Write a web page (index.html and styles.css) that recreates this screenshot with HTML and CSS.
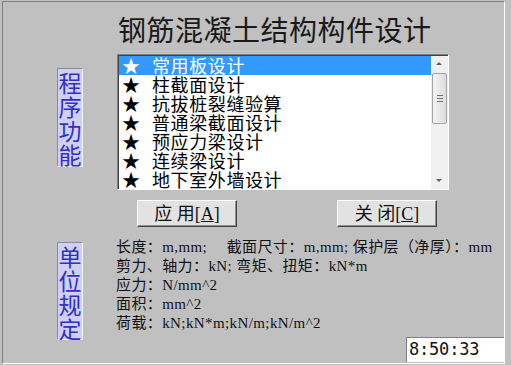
FILE: index.html
```html
<!DOCTYPE html>
<html lang="zh-CN">
<head>
<meta charset="UTF-8" />
<title>钢筋混凝土结构构件设计</title>
<link rel="stylesheet" href="styles.css">
</head>
<body>
  <div class="window">
    <h1 class="title">钢筋混凝土结构构件设计</h1>

    <div class="section">
      <div class="tag tag-func">程序功能</div>
      <div class="listbox">
        <ul class="items">
          <li class="item selected"><span class="star">★</span>常用板设计</li>
          <li class="item"><span class="star">★</span>柱截面设计</li>
          <li class="item"><span class="star">★</span>抗拔桩裂缝验算</li>
          <li class="item"><span class="star">★</span>普通梁截面设计</li>
          <li class="item"><span class="star">★</span>预应力梁设计</li>
          <li class="item"><span class="star">★</span>连续梁设计</li>
          <li class="item"><span class="star">★</span>地下室外墙设计</li>
        </ul>
        <div class="scrollbar">
          <div class="sb-btn sb-up"></div>
          <div class="sb-thumb"><i></i><i></i><i></i></div>
          <div class="sb-track"></div>
          <div class="sb-btn sb-down"></div>
        </div>
      </div>
    </div>

    <div class="buttons">
      <button class="btn">应 用[<u>A</u>]</button>
      <button class="btn">关 闭[<u>C</u>]</button>
    </div>

    <div class="section units-section">
      <div class="tag tag-units">单位规定</div>
      <div class="units">
        <p>长度：m,mm;　 截面尺寸：m,mm; 保护层（净厚）：mm</p>
        <p>剪力、轴力：kN; 弯矩、扭矩：kN*m</p>
        <p>应力：N/mm^2</p>
        <p>面积：mm^2</p>
        <p>荷载：kN;kN*m;kN/m;kN/m^2</p>
        <div class="clock">8:50:33</div>
      </div>
    </div>
  </div>
</body>
</html>
```

FILE: styles.css
```css
body {
  margin: 0;
  background: #c0c0c0;
  font-family: "Noto Sans CJK SC", sans-serif;
  color: #111;
}
.window {
  margin: 1px 6px 0 2px;
  height: 363px;
  box-sizing: border-box;
  border-top: 1px solid #808080;
  border-left: 1px solid #808080;
  border-right: 1px solid #fff;
  border-bottom: 1px solid #fff;
  display: flex;
  flex-direction: column;
}
.title {
  margin: 11px 0 0 115px;
  font-size: 28px;
  font-weight: 400;
  line-height: 32px;
  letter-spacing: 0.5px;
  color: #1a1a1a;
}
.section {
  display: flex;
  align-items: flex-start;
  margin-top: 9px;
}
.tag {
  width: 26px;
  margin-left: 54px;
  box-sizing: border-box;
  background: #d0d0f6;
  color: #3030c8;
  border-top: 1px solid #8a8a9a;
  border-left: 1px solid #8a8a9a;
  border-right: 1px solid #f4f4ff;
  border-bottom: 1px solid #f4f4ff;
  font-size: 23px;
  line-height: 24px;
  text-align: center;
  padding: 1px 0;
}
.tag-func {
  margin-top: 14px;
  height: 99px;
}
.listbox {
  margin-left: 34px;
  width: 332px;
  height: 136px;
  box-sizing: border-box;
  display: flex;
  background: #fff;
  border-top: 1px solid #808080;
  border-left: 1px solid #808080;
  border-right: 1px solid #fff;
  border-bottom: 1px solid #fff;
  box-shadow: inset 1px 1px 0 #404040;
  padding: 1px 0 0 1px;
}
.items {
  list-style: none;
  margin: 0;
  padding: 0;
  flex: 1;
  overflow: hidden;
}
.item {
  height: 19px;
  line-height: 19px;
  font-size: 18px;
  letter-spacing: 0.6px;
  color: #000;
  padding-left: 3px;
  white-space: nowrap;
}
.item.selected {
  background: #3399ff;
  color: #fff;
}
.star {
  display: inline-block;
  width: 30px;
  letter-spacing: 0;
}
.scrollbar {
  width: 17px;
  display: flex;
  flex-direction: column;
  background: #f0f0f0;
}
.sb-btn {
  height: 17px;
  position: relative;
}
.sb-btn::after {
  content: "";
  position: absolute;
  left: 5px;
  width: 0;
  height: 0;
  border-left: 3px solid transparent;
  border-right: 3px solid transparent;
}
.sb-up::after {
  top: 6px;
  border-bottom: 3px solid #606060;
}
.sb-down::after {
  top: 7px;
  border-top: 3px solid #606060;
}
.sb-thumb {
  height: 51px;
  margin: 0 1px;
  box-sizing: border-box;
  border: 1px solid #a4a4a4;
  border-radius: 2px;
  background: linear-gradient(to right, #f4f4f4, #dcdcdc);
  display: flex;
  flex-direction: column;
  align-items: center;
  justify-content: center;
  gap: 2px;
}
.sb-thumb i {
  display: block;
  width: 6px;
  height: 1px;
  background: #707070;
}
.sb-track {
  flex: 1;
}
.buttons {
  display: flex;
  gap: 100px;
  margin: 10px 0 0 134px;
}
.btn {
  width: 100px;
  height: 27px;
  padding: 0;
  background: #e2e2e2;
  border-top: 1px solid #fff;
  border-left: 1px solid #fff;
  border-right: 1px solid #404040;
  border-bottom: 1px solid #404040;
  box-shadow: inset -1px -1px 0 #909090;
  font-family: "Liberation Serif", "Noto Sans CJK SC", serif;
  font-size: 18px;
  line-height: 24px;
  color: #111;
}
.btn u {
  text-underline-offset: 1px;
}
.units-section {
  margin-top: 0;
  flex: 1;
}
.tag-units {
  margin-top: 15px;
  height: 98px;
}
.units {
  flex: 1;
  margin: 11px 0 0 33px;
  display: flex;
  flex-direction: column;
  font-family: "Liberation Serif", "Noto Sans CJK SC", serif;
  font-size: 15px;
  letter-spacing: 0.4px;
}
.units p {
  margin: 0;
  height: 19px;
  line-height: 19px;
  white-space: pre;
  color: #111;
}
.clock {
  align-self: flex-end;
  margin-top: 4px;
  width: 98px;
  height: 25px;
  box-sizing: border-box;
  background: #fff;
  border-top: 1px solid #808080;
  border-left: 1px solid #808080;
  font-family: "DejaVu Sans Mono", monospace;
  font-size: 17px;
  line-height: 23px;
  letter-spacing: -0.2px;
  padding-left: 2px;
  color: #111;
}
```
